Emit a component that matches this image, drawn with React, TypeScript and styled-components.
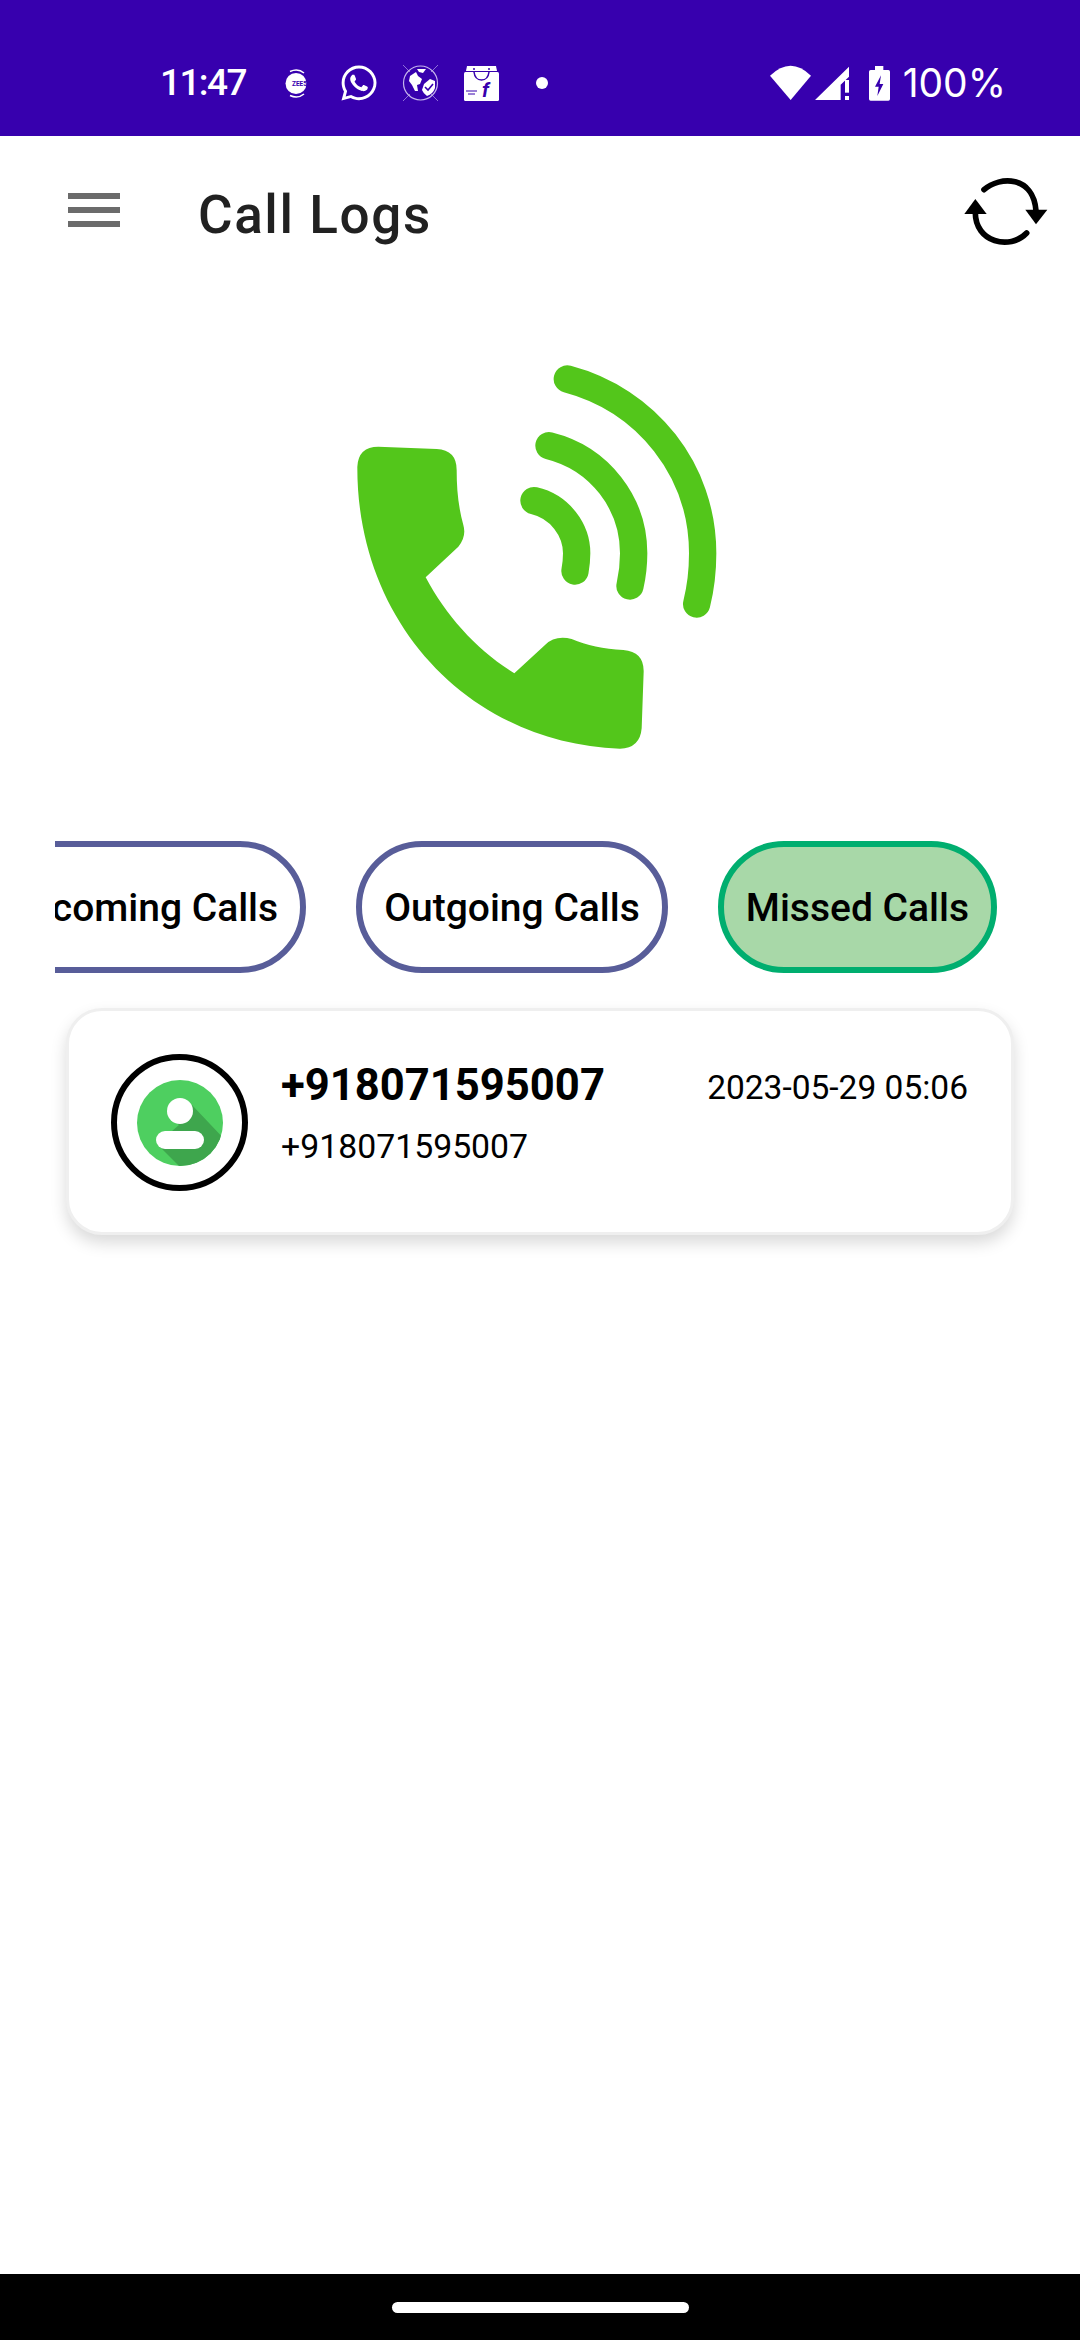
import { createGlobalStyle, styled } from 'styled-components'
import { FaWhatsapp } from 'react-icons/fa'

const GlobalStyle = createGlobalStyle`
  html, body {
    margin: 0;
    padding: 0;
    background: #fff;
    font-family: Roboto, "Liberation Sans", sans-serif;
  }
`

const Page = styled.div`
  width: 1080px;
  height: 2340px;
  display: flex;
  flex-direction: column;
  overflow: hidden;
  background: #fff;
`

// Android status bar
const StatusBar = styled.div`
  height: 136px;
  flex-shrink: 0;
  display: flex;
  align-items: center;
  padding: 30px 74px 0 160px;
  box-sizing: border-box;
  background: #3700ae;
  color: #fff;
`

const Clock = styled.span`
  width: 84px;
  font-size: 37px;
  font-weight: 500;
  letter-spacing: -1.6px;
  line-height: 40px;
  white-space: nowrap;
`

const NotifSlot = styled.span<{ $left: number }>`
  display: flex;
  margin-left: ${p => p.$left}px;
`

const Dot = styled.span`
  width: 12px;
  height: 12px;
  margin-left: 37px;
  border-radius: 50%;
  background: #fff;
`

const Battery = styled.span`
  font-family: Inter, sans-serif;
  font-size: 39px;
  line-height: 40px;
  margin-left: 13px;
`

const StatusRight = styled.div`
  display: flex;
  align-items: center;
  margin-left: auto;
`

const Header = styled.header`
  height: 150px;
  flex-shrink: 0;
  display: flex;
  align-items: center;
  padding: 0 30px 0 68px;
  box-sizing: border-box;
`

const Hamburger = styled.div`
  width: 52px;
  height: 34px;
  margin-top: -3px;
  display: flex;
  flex-direction: column;
  justify-content: space-between;

  span {
    height: 6px;
    background: #6b6b6b;
  }
`

const Title = styled.h1`
  margin: 8px 0 0 78px;
  font-size: 53px;
  font-weight: 500;
  letter-spacing: 1.6px;
  color: #212121;
`

const RefreshButton = styled.svg`
  margin-left: auto;
  width: 90px;
  height: 75px;
`

const Hero = styled.div`
  display: flex;
  padding: 54px 0 0 320px;
  margin-bottom: 81px;

  svg {
    width: 420px;
    height: 420px;
  }
`

const Tabs = styled.div`
  margin-left: 55px;
  width: 942px;
  height: 132px;
  display: flex;
  justify-content: flex-end;
  gap: 50px;
  overflow: hidden;
  flex-shrink: 0;
`

const Tab = styled.div<{ $active?: boolean }>`
  flex-shrink: 0;
  height: 132px;
  box-sizing: border-box;
  display: flex;
  align-items: center;
  padding: 2px 22px 0;
  border-radius: 66px;
  border: 6px solid ${p => (p.$active ? '#00ae6f' : '#585d99')};
  background: ${p => (p.$active ? '#a8d8a8' : '#fff')};
  font-size: 39px;
  font-weight: 460;
  color: #000;
  white-space: nowrap;
`

const Card = styled.div`
  margin: 35px 0 0 66px;
  width: 948px;
  height: 227px;
  box-sizing: border-box;
  display: flex;
  padding: 43px 43px 0 42px;
  background: #fff;
  border: 3px solid #efefef;
  border-radius: 36px;
  box-shadow: 0 8px 16px rgba(0, 0, 0, 0.15);
`

const Avatar = styled.div`
  width: 137px;
  height: 137px;
  flex-shrink: 0;
  box-sizing: border-box;
  border: 6px solid #000;
  border-radius: 50%;
  display: flex;
  align-items: center;
  justify-content: center;
`

const CardBody = styled.div`
  flex: 1;
  margin-left: 33px;
`

const CardTop = styled.div`
  display: flex;
  align-items: center;
  justify-content: space-between;
  height: 63px;
`

const Name = styled.span`
  font-size: 43.6px;
  font-weight: 700;
  color: #000;
`

const When = styled.span`
  margin-top: 3px;
  font-size: 33.5px;
  color: #000;
`

const Number = styled.div`
  margin-top: 8px;
  font-size: 33.8px;
  line-height: 44px;
  color: #000;
`

const Spacer = styled.div`
  flex: 1;
`

const NavBar = styled.div`
  height: 66px;
  flex-shrink: 0;
  display: flex;
  align-items: center;
  justify-content: center;
  background: #000;
`

const NavHandle = styled.div`
  width: 297px;
  height: 11px;
  border-radius: 6px;
  background: #fff;
`

function ZeeIcon() {
  return (
    <svg width="28" height="29" viewBox="0 0 28 29">
      <circle cx="12" cy="14.5" r="10.5" fill="#fff" />
      <path d="M6 2.5 Q14 -1 20 4 M6 26.5 Q14 30 20 25" stroke="#fff" strokeWidth="1.5" fill="none" />
      <text x="8" y="17" fontFamily="Roboto, sans-serif" fontSize="6.5" fontWeight="700" fill="#3700ae">ZEE5</text>
    </svg>
  )
}

function GlobeIcon() {
  return (
    <svg width="37" height="38" viewBox="0 0 37 38">
      <path d="M1 1 L8 8 M36 1 L29 8 M1 37 L8 30 M36 37 L29 30" stroke="#8f70d8" strokeWidth="1" />
      <circle cx="18.5" cy="19" r="17" fill="none" stroke="#c5b4ec" strokeWidth="1.2" />
      <path d="M8 12 L14 8 L16 12 L20 15 L18 20 L15 21 L16 27 L13 27 L10 21 L7 17 Z" fill="#fff" />
      <path d="M15 5 L24 5 L21 9 L17 8 Z" fill="#fff" />
      <path d="M22 20 L28 15 L33 17 L33 24 Q31 30 25 32 Q21 29 20 26 Z" fill="#fff" />
      <path d="M23 23 L26 26 L31 20" stroke="#3700ae" strokeWidth="1.6" fill="none" />
    </svg>
  )
}

function FlipkartIcon() {
  return (
    <svg width="35" height="35" viewBox="0 0 35 35">
      <path d="M3 0 H32 L33 5 H2 Z" fill="#fff" />
      <rect x="0" y="6" width="35" height="29" rx="1.5" fill="#fff" />
      <circle cx="10" cy="3" r="1" fill="#3700ae" />
      <circle cx="25" cy="3" r="1" fill="#3700ae" />
      <path d="M10 6 Q11 14 17.5 14 Q24 14 25 6" stroke="#3700ae" strokeWidth="1.5" fill="none" />
      <path d="M2 25 H13 M4 28 H11" stroke="#3700ae" strokeWidth="1" />
      <text x="18" y="31" fontFamily="Roboto, sans-serif" fontSize="20" fontWeight="700" fontStyle="italic" fill="#3700ae">f</text>
    </svg>
  )
}

function SystemIcons() {
  return (
    <svg width="120" height="38" viewBox="213 190 360 114">
      <path d="M213 225 Q275 165 336 225 L275 298 Z" fill="#fff" />
      <path d="M348 298 L450 198 V228 L425 252 V298 Z" fill="#fff" />
      <rect x="438" y="238" width="12" height="38" fill="#fff" />
      <rect x="438" y="286" width="12" height="12" fill="#fff" />
      <path d="M528 196 H553 V208 H568 Q573 208 573 213 V295 Q573 300 568 300 H515 Q510 300 510 295 V213 Q510 208 515 208 H528 Z" fill="#fff" />
      <path d="M546 224 L528 258 H539 L535 286 L553 250 H542 Z" fill="#3700ae" />
    </svg>
  )
}

function RefreshIcon() {
  return (
    <RefreshButton viewBox="780 525 270 225">
      <path d="M852 572 C 900 530, 1000 530, 1008 635" stroke="#000" strokeWidth="17" fill="none" strokeLinecap="round" />
      <path d="M976 632 H1042 L1008 676 Z" fill="#000" />
      <path d="M826 640 C 825 730, 930 755, 980 702" stroke="#000" strokeWidth="17" fill="none" strokeLinecap="round" />
      <path d="M793 645 H860 L826 600 Z" fill="#000" />
    </RefreshButton>
  )
}

function PhoneArt() {
  return (
    <svg viewBox="0 0 1260 1260">
      <path
        d="M175 320 L350 327 Q410 330 410 390 C410 450 415 500 430 555 Q440 590 415 620 L317 712 C380 830 470 930 583 1000 L675 915 Q705 885 755 897 C800 915 850 928 910 930 Q972 935 971 995 L965 1165 Q960 1225 900 1226 C450 1210 110 850 112 380 Q115 320 175 320 Z"
        fill="#53c61b"
      />
      <g stroke="#53c61b" strokeWidth="82" strokeLinecap="round" fill="none">
        <path d="M742 117 C980 180 1148 390 1148 640 Q1148 720 1130 792" />
        <path d="M687 317 C840 355 941 490 941 640 Q941 690 930 738" />
        <path d="M642 482 C720 500 770 570 770 640 Q770 665 765 693" />
      </g>
    </svg>
  )
}

function ContactArt() {
  return (
    <svg width="86" height="86" viewBox="0 0 86 86">
      <defs>
        <clipPath id="disc">
          <circle cx="43" cy="43" r="43" />
        </clipPath>
      </defs>
      <circle cx="43" cy="43" r="43" fill="#4ecf60" />
      <polygon points="55,25 90,62 90,90 46,90 20,64 42,45 36,40" fill="#3ea64d" clipPath="url(#disc)" />
      <circle cx="43" cy="31" r="13" fill="#fff" />
      <rect x="19" y="51" width="48" height="18" rx="9" fill="#fff" />
    </svg>
  )
}

export default function App() {
  return (
    <Page>
      <GlobalStyle />
      <StatusBar>
        <Clock>11:47</Clock>
        <NotifSlot $left={40}><ZeeIcon /></NotifSlot>
        <NotifSlot $left={27}><FaWhatsapp size={40} /></NotifSlot>
        <NotifSlot $left={23}><GlobeIcon /></NotifSlot>
        <NotifSlot $left={25}><FlipkartIcon /></NotifSlot>
        <Dot />
        <StatusRight>
          <SystemIcons />
          <Battery>100%</Battery>
        </StatusRight>
      </StatusBar>

      <Header>
        <Hamburger>
          <span />
          <span />
          <span />
        </Hamburger>
        <Title>Call Logs</Title>
        <RefreshIcon />
      </Header>

      <Hero>
        <PhoneArt />
      </Hero>

      <Tabs>
        <Tab>Incoming Calls</Tab>
        <Tab>Outgoing Calls</Tab>
        <Tab $active>Missed Calls</Tab>
      </Tabs>

      <Card>
        <Avatar>
          <ContactArt />
        </Avatar>
        <CardBody>
          <CardTop>
            <Name>+918071595007</Name>
            <When>2023-05-29 05:06</When>
          </CardTop>
          <Number>+918071595007</Number>
        </CardBody>
      </Card>

      <Spacer />
      <NavBar>
        <NavHandle />
      </NavBar>
    </Page>
  )
}
